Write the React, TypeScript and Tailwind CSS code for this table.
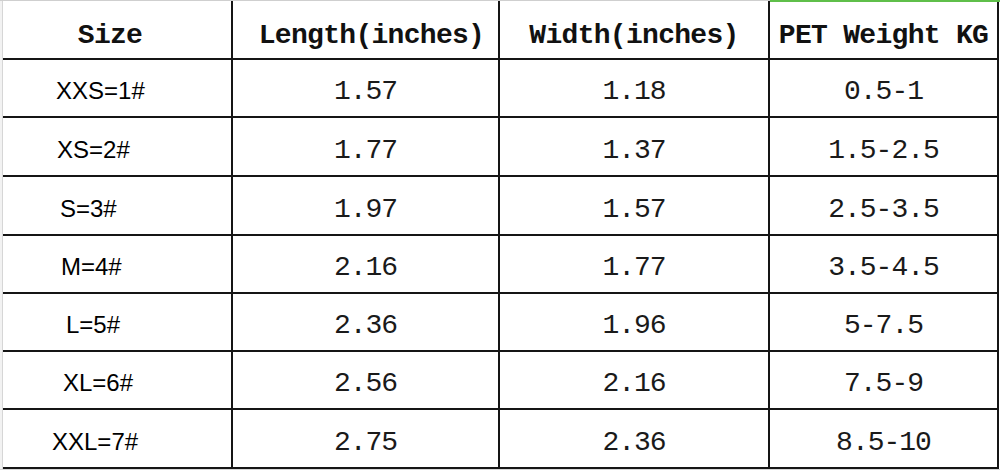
const rows = [
  { size: 'XXS=1#', pad: 'pl-[53px]', length: '1.57', width: '1.18', weight: '0.5-1' },
  { size: 'XS=2#', pad: 'pl-[54px]', length: '1.77', width: '1.37', weight: '1.5-2.5' },
  { size: 'S=3#', pad: 'pl-[57px]', length: '1.97', width: '1.57', weight: '2.5-3.5' },
  { size: 'M=4#', pad: 'pl-[58px]', length: '2.16', width: '1.77', weight: '3.5-4.5' },
  { size: 'L=5#', pad: 'pl-[63px]', length: '2.36', width: '1.96', weight: '5-7.5' },
  { size: 'XL=6#', pad: 'pl-[60px]', length: '2.56', width: '2.16', weight: '7.5-9' },
  { size: 'XXL=7#', pad: 'pl-[49px]', length: '2.75', width: '2.36', weight: '8.5-10' },
]

const mono = "font-['Liberation_Mono',monospace]"
const head = `${mono} flex items-center justify-center bg-white pt-[12px] text-[28px] font-bold tracking-[-0.7px] text-[#111]`
const num = `${mono} flex items-center justify-center bg-white pt-[8px] text-[28px] tracking-[-1px] text-[#1a1a1a]`

export default function App() {
  return (
    <div className="relative h-[473px] w-[1000px] overflow-hidden bg-white">
      {/* spreadsheet gridlines round the table */}
      <div className="h-px w-full bg-[#cfcfcf]" />
      <div className="absolute right-0 top-0 h-[2px] w-[230px] bg-[#5fbf4a]" />
      <div className="flex">
        <div className="w-[3px] border-r border-[#d6d6d6] bg-[#f2f2f2]" />
        <div className="grid grid-cols-[228px_265px_268px_227px] grid-rows-[57px_56px_57px_57px_56px_56px_56px_57px] gap-[2px] bg-[#151515] pb-[2px] pr-[2px]">
          <div className={`${head} pr-[14px]`}>Size</div>
          <div className={`${head} pl-[12px]`}>Length(inches)</div>
          <div className={head}>Width(inches)</div>
          <div className={head}>PET Weight KG</div>
          {rows.map((r) => (
            <div key={r.size} className="contents">
              <div
                className={`flex items-center bg-white pt-[6px] font-['Liberation_Sans',Arial,sans-serif] text-[24px] text-black ${r.pad}`}
              >
                {r.size}
              </div>
              <div className={num}>{r.length}</div>
              <div className={num}>{r.width}</div>
              <div className={num}>{r.weight}</div>
            </div>
          ))}
        </div>
      </div>
      <div className="h-px w-full bg-[#d6d6d6]" />
    </div>
  )
}
